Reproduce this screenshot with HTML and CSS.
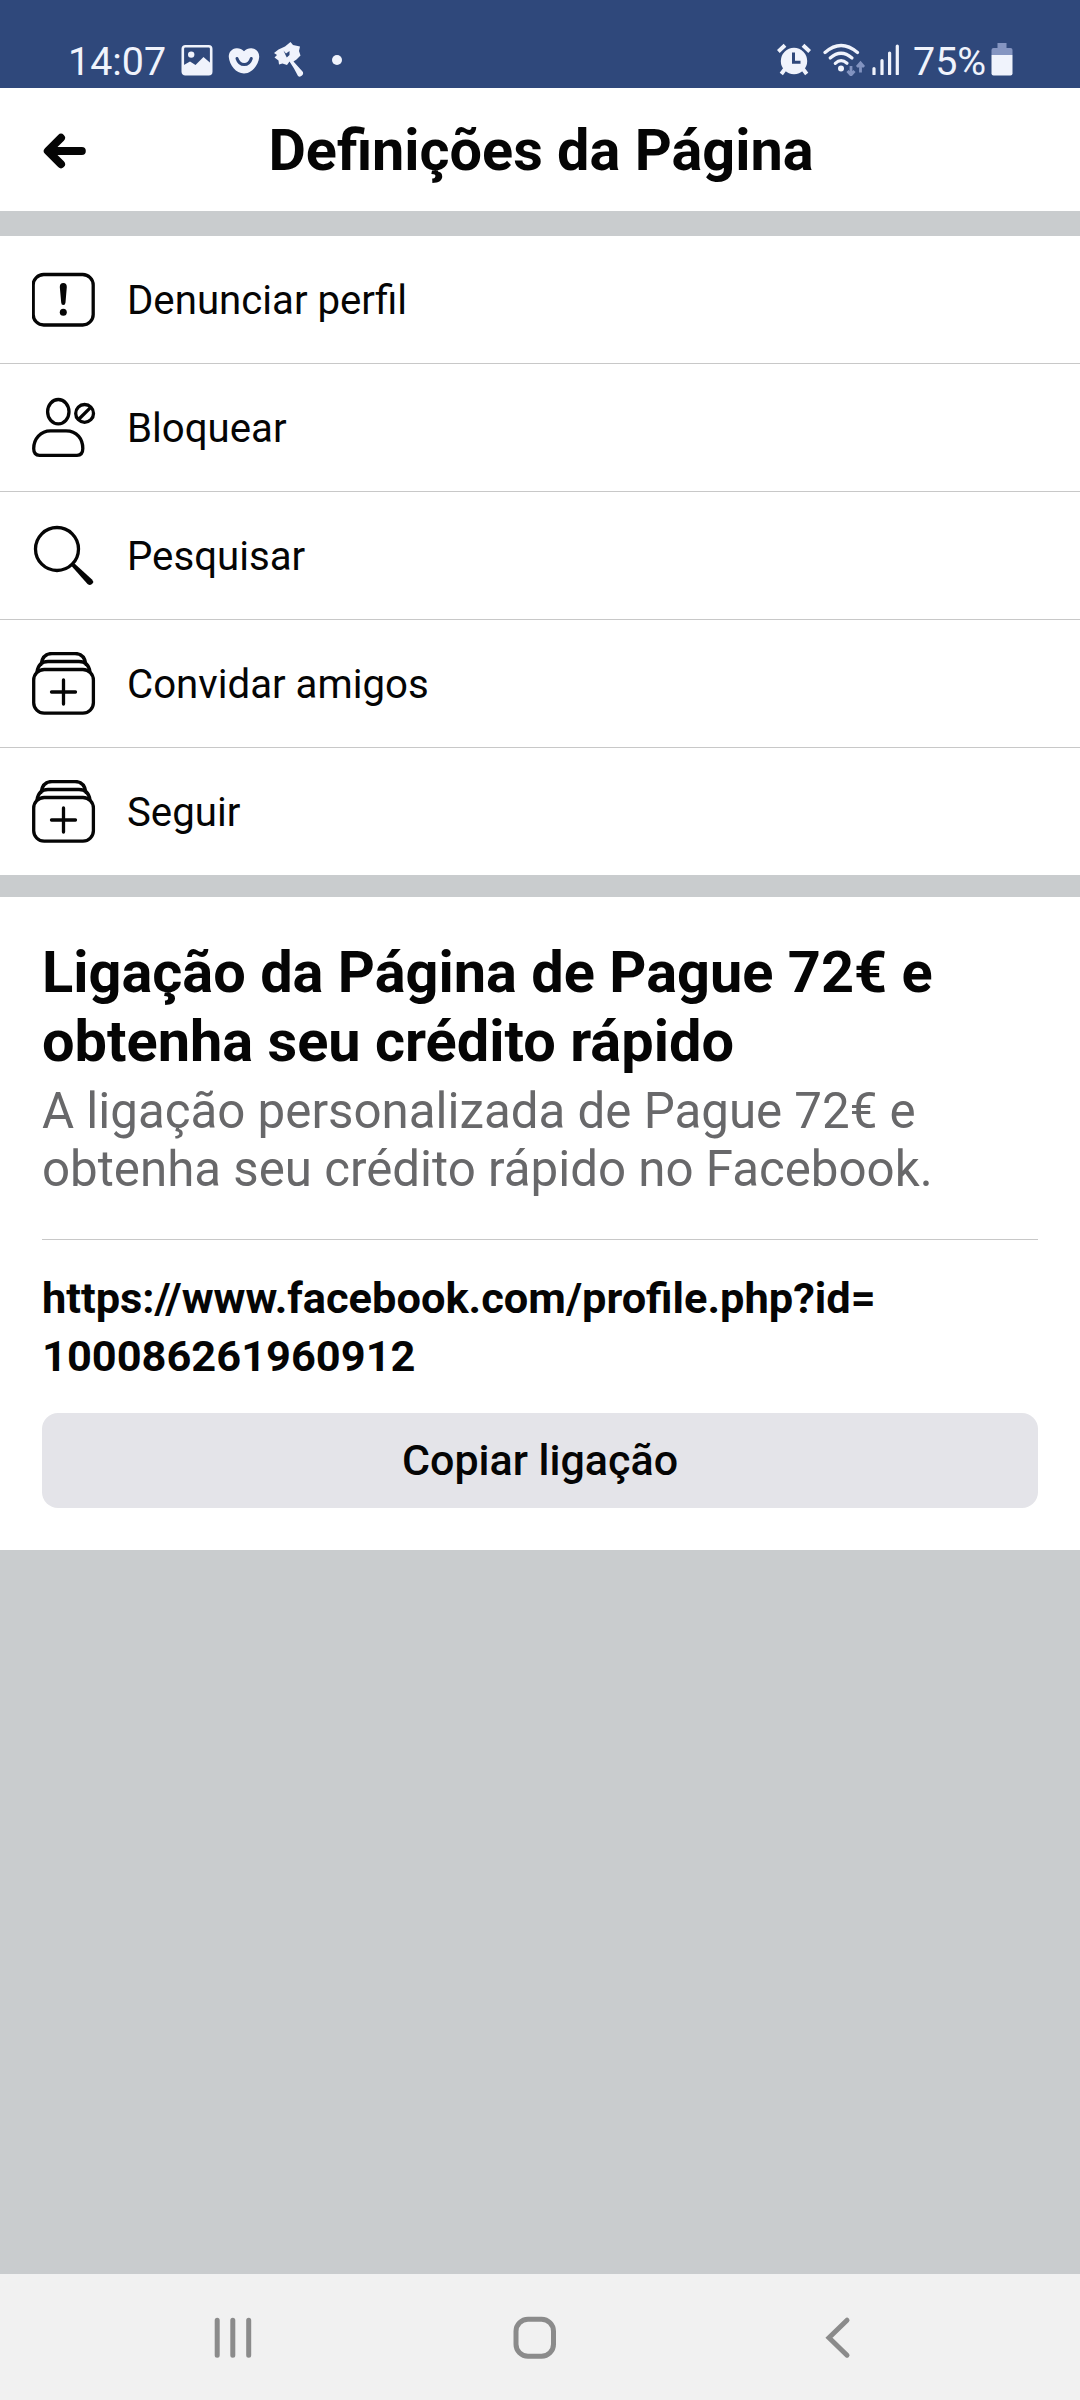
FILE: index.html
```html
<!DOCTYPE html>
<html lang="pt">
<head>
<meta charset="utf-8">
<title>Definições da Página</title>
<link rel="stylesheet" href="styles.css">
</head>
<body>
<div class="statusbar">
  <span class="clock">14:07</span>
  <svg width="32" height="32" viewBox="0 0 32 32">
    <rect x="1.8" y="2.2" width="28.4" height="28" rx="2.5" fill="none" stroke="#f0f3fc" stroke-width="2.6"/>
    <circle cx="10.2" cy="10.6" r="3.2" fill="#f0f3fc"/>
    <path d="M2 21.5 9 17.5 14.5 21 22.5 13 30 19.5V28q0 2.500-2.500 2.500H4.500Q2 30.500 2 28z" fill="#f0f3fc"/>
  </svg>
  <svg class="heart" width="32" height="26" viewBox="0 0 32 26">
    <path d="M16 3.200C18 .8 21 0 23.500.2 28.500.6 31.500 4.500 31.200 9 30.500 17 24 25.500 16 25.500S1.500 17 .8 9C.5 4.500 3.500.6 8.500.2 11 0 14 .8 16 3.200z" fill="#f0f3fc"/>
    <path d="M9 10.500Q11 16.600 16.200 16.600T23.300 10.500" fill="none" stroke="#2f487b" stroke-width="3" stroke-linecap="round"/>
  </svg>
  <svg class="hammer" width="30" height="35" viewBox="0 0 30 35">
    <path d="M0 11 4.500 7.500 11 4.500 16.500 0 19 3 26 4.500 25 9 26.500 13.500 22.500 17.500 19.500 19.500 28.500 29.500Q30 31.500 28 33.500T24 34L20 26.500 15.500 19.500 13 23 8.500 21.500 5 22.500 4.500 18.500.5 15.500 3 13z" fill="#f0f3fc"/>
    <path d="M9.500 8.500 12 11.500 15.500 9 15.500 13 12.800 15.500 11.500 13z" fill="#2f487b"/>
  </svg>
  <span class="dot"></span>
  <span class="spacer"></span>
  <svg width="34" height="33" viewBox="0 0 34 33">
    <g stroke="#f0f3fc" stroke-linecap="butt">
      <path d="M1.300 8.500 8 2.300M26 2.300 32.700 8.500" stroke-width="4"/>
      <path d="M8 26 4.300 31M26 26 29.700 31" stroke-width="4"/>
    </g>
    <circle cx="17" cy="18" r="13.200" fill="#f0f3fc"/>
    <path d="M16.500 9.500V19.300H23.500" fill="none" stroke="#2f487b" stroke-width="3"/>
  </svg>
  <svg class="wifi" width="43" height="33" viewBox="0 0 43 33">
    <g fill="none" stroke="#f0f3fc" stroke-width="3.200" stroke-linecap="round">
      <path d="M2 9.500Q18 -4.500 34.500 9.500"/>
      <path d="M7.200 15Q18 5.500 29 15"/>
      <path d="M12.300 20.300Q18 15 24 20.300"/>
    </g>
    <circle cx="18" cy="25.500" r="3" fill="#f0f3fc"/>
    <path d="M28 23V31M24.500 28 28 32 31.500 28M37.500 29.500V21M34 24 37.500 20 41 24" fill="none" stroke="#8293c0" stroke-width="2.800"/>
  </svg>
  <svg class="signal" width="28" height="31" viewBox="0 0 28 31">
    <path d="M2 30V24.500M10 30V16.500M17.600 30V9M25.300 30V2" stroke="#f0f3fc" stroke-width="3.200" stroke-linecap="round"/>
  </svg>
  <span class="percent">75%</span>
  <svg class="battery" width="22" height="33" viewBox="0 0 22 33">
    <path d="M6.500 0H15.500V5H6.500zM2.500 5H19.500Q21.500 5 21.500 7V12H.5V7Q.5 5 2.500 5z" fill="#8595c1"/>
    <path d="M.5 12H21.500V30.500Q21.500 32.500 19.500 32.500H2.500Q.5 32.500.5 30.500z" fill="#f0f3fc"/>
  </svg>
</div>

<header class="header">
  <svg class="back" width="44" height="36" viewBox="0 0 44 36">
    <path d="M39.800 18H6.500M19 4.800 5.800 18 19 31.200" fill="none" stroke="#050505" stroke-width="8" stroke-linecap="round" stroke-linejoin="round"/>
  </svg>
  <h1 class="title">Definições da Página</h1>
</header>

<ul class="menu">
  <li class="item">
    <svg class="icon" viewBox="0 0 64 64">
      <rect x="1.200" y="6.500" width="60" height="50.500" rx="10.500"/>
      <path class="solid" d="M27.800 19Q27.800 15 31.300 15T34.800 19L33.500 34.500Q33.300 37 31.300 37T29.200 34.500z"/>
      <circle class="solid" cx="31.300" cy="44.300" r="3.500"/>
    </svg>
    <span>Denunciar perfil</span>
  </li>
  <li class="item">
    <svg class="icon" viewBox="0 0 64 64">
      <ellipse cx="26.300" cy="15.700" rx="10.700" ry="12.200"/>
      <path d="M18.500 34.800H34C45 34.800 50.800 43 50.800 52.500Q50.800 59.300 45 59.300H7.500Q1.700 59.300 1.700 52.500C1.700 43 8.500 34.800 18.500 34.800z"/>
      <circle cx="52.600" cy="17.400" r="8.900"/>
      <path d="M46.500 23.500 58.700 11.300"/>
    </svg>
    <span>Bloquear</span>
  </li>
  <li class="item">
    <svg class="icon" viewBox="0 0 64 64">
      <circle cx="25" cy="25" r="21.500"/>
      <path class="solid" d="M39.500 42 42.500 39.500 60 55.500Q62 57.500 60.500 59.500 58.500 62 55.500 60z"/>
    </svg>
    <span>Pesquisar</span>
  </li>
  <li class="item">
    <svg class="icon" viewBox="0 0 64 64">
      <rect x="1.700" y="17.500" width="59.700" height="43.700" rx="10.500"/>
      <path d="M5 20C6 13 10 9.500 16 9.500H47C53 9.500 57 13 58 20M9 12.500C10 5 14 1.500 20 1.500H43C49 1.500 53 5 54 12.500M19.500 40H43.500M31.500 28V52" stroke-linecap="round"/>
    </svg>
    <span>Convidar amigos</span>
  </li>
  <li class="item">
    <svg class="icon" viewBox="0 0 64 64">
      <rect x="1.700" y="17.500" width="59.700" height="43.700" rx="10.500"/>
      <path d="M5 20C6 13 10 9.500 16 9.500H47C53 9.500 57 13 58 20M9 12.500C10 5 14 1.500 20 1.500H43C49 1.500 53 5 54 12.500M19.500 40H43.500M31.500 28V52" stroke-linecap="round"/>
    </svg>
    <span>Seguir</span>
  </li>
</ul>

<section class="link">
  <h2 class="heading">Ligação da Página de Pague 72€ e obtenha seu crédito rápido</h2>
  <p class="desc">A ligação personalizada de Pague 72€ e obtenha seu crédito rápido no Facebook.</p>
  <p class="url">https://www.facebook.com/profile.php?id=<wbr>100086261960912</p>
  <button class="copy" type="button">Copiar ligação</button>
</section>

<nav class="navbar">
  <svg width="38" height="44" viewBox="0 0 38 44">
    <path d="M3.200 4.200V39.200M18.800 4.200V39.200M34.700 4.200V39.200" fill="none" stroke="#8b8b8b" stroke-width="5" stroke-linecap="round"/>
  </svg>
  <svg class="home" width="44" height="44" viewBox="0 0 44 44">
    <rect x="3" y="3.300" width="37.500" height="37" rx="12" fill="none" stroke="#8b8b8b" stroke-width="5"/>
  </svg>
  <svg width="26" height="44" viewBox="0 0 26 44">
    <path d="M22 4.200 4 21.700 22 39.200" fill="none" stroke="#8b8b8b" stroke-width="5" stroke-linecap="round"/>
  </svg>
</nav>
</body>
</html>
```
FILE: styles.css
```css
* {
  box-sizing: border-box;
}

body {
  margin: 0;
  width: 1080px;
  height: 2400px;
  display: flex;
  flex-direction: column;
  background: #c9ccce;
  color: #050505;
  font-family: Roboto, "Liberation Sans", sans-serif;
}

h1, h2, p, ul {
  margin: 0;
  padding: 0;
}

svg {
  display: block;
  flex: none;
}

.statusbar {
  height: 88px;
  padding: 31px 67px 0 68px;
  display: flex;
  align-items: center;
  background: #2f487b;
  color: #f0f3fc;
  font-size: 39.4px;
  line-height: 1;
}

.clock {
  width: 113px;
  padding-top: 4px;
}

.heart {
  margin: 2px 0 0 15px;
}

.hammer {
  margin-left: 14px;
}

.dot {
  width: 10px;
  height: 10px;
  margin-left: 28px;
  border-radius: 50%;
  background: #f0f3fc;
}

.spacer {
  flex: 1;
}

.wifi {
  margin-left: 12px;
}

.signal {
  margin-left: 6px;
}

.percent {
  margin-left: 13px;
  padding-top: 4px;
  width: 78px;
}

.header {
  height: 123px;
  padding: 3px 42px 0;
  display: grid;
  grid-template-columns: 44px 1fr 44px;
  align-items: center;
  background: #fff;
}

.title {
  padding-left: 2px;
  font-size: 57.6px;
  font-weight: 700;
  line-height: 68px;
  text-align: center;
}

.menu {
  margin: 25px 0 22px;
  list-style: none;
  background: #fff;
}

.item {
  height: 128px;
  padding: 0 32px;
  display: flex;
  align-items: center;
  gap: 31px;
  border-bottom: 1px solid #c8c8c8;
  font-size: 40.2px;
  line-height: 48px;
}

.item:last-child {
  height: 127px;
  border-bottom: 0;
}

.item span {
  padding-top: 3px;
}

.icon {
  width: 64px;
  height: 64px;
  margin-top: 1px;
  fill: none;
  stroke: #050505;
  stroke-width: 3.3;
}

.icon .solid {
  fill: #050505;
  stroke: none;
}

.link {
  height: 653px;
  padding: 41px 42px 42px;
  background: #fff;
}

.heading {
  font-size: 57.7px;
  font-weight: 700;
  line-height: 69px;
}

.desc {
  padding: 6px 0 41px;
  border-bottom: 1px solid #c8c8c8;
  color: #68686a;
  font-size: 49.25px;
  line-height: 58px;
}

.url {
  padding: 30px 0 27px;
  font-size: 43.4px;
  font-weight: 700;
  line-height: 58px;
}

.copy {
  display: block;
  width: 100%;
  height: 95px;
  padding: 0;
  border: 0;
  border-radius: 16px;
  background: #e4e4e9;
  color: #050505;
  font: 500 43px/95px Roboto, "Liberation Sans", sans-serif;
}

.navbar {
  height: 126px;
  margin-top: auto;
  padding: 2px 229px 0 214px;
  display: flex;
  align-items: center;
  justify-content: space-between;
  background: #f1f1f1;
}

.home {
  margin-right: 7px;
}
```
